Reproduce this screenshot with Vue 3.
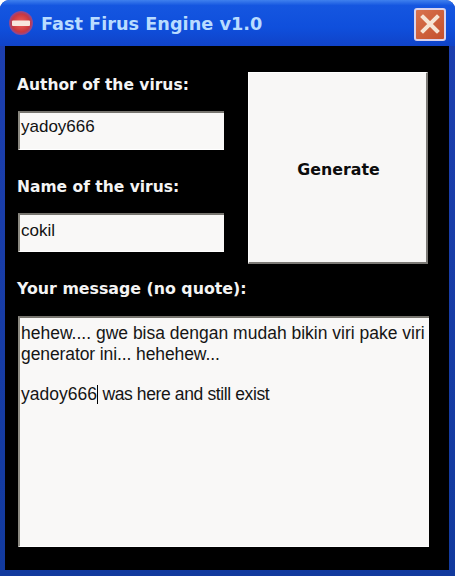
<script setup>
const title = 'Fast Firus Engine v1.0'
</script>

<template>
  <div class="window">
    <header class="titlebar">
      <svg class="app-icon" width="26" height="26" viewBox="0 0 26 26">
        <defs>
          <radialGradient id="stop" cx="50%" cy="50%" r="50%">
            <stop offset="0%" stop-color="#f0605a" />
            <stop offset="75%" stop-color="#c9383f" />
            <stop offset="100%" stop-color="#8a4a9a" />
          </radialGradient>
        </defs>
        <circle cx="13" cy="13" r="12" fill="url(#stop)" />
        <rect x="4" y="10.5" width="18" height="5.5" rx="1" fill="#f8e6e0" />
      </svg>
      <span class="title">{{ title }}</span>
      <button class="close" type="button">
        <svg width="22" height="22" viewBox="0 0 22 22">
          <path d="M4 4 L18 18 M18 4 L4 18" stroke="#f6e4d4" stroke-width="4" stroke-linecap="square" fill="none" />
        </svg>
      </button>
    </header>
    <main class="client">
      <div class="top">
        <div class="fields">
          <label class="label first">Author of the virus:</label>
          <div class="field author">yadoy666</div>
          <label class="label second">Name of the virus:</label>
          <div class="field name">cokil</div>
        </div>
        <div class="generate">Generate</div>
      </div>
      <label class="label third">Your message (no quote):</label>
      <div class="message">
        <div>hehew.... gwe bisa dengan mudah bikin viri pake viri</div>
        <div class="tight">generator ini... hehehew...</div>
        <div class="blank">&nbsp;</div>
        <div>yadoy666<span class="caret"></span><span class="tighter"> was here and still exist</span></div>
      </div>
    </main>
  </div>
</template>

<style>
html, body { margin: 0; background: #ffffff; }
</style>

<style scoped>
.window {
  width: 455px;
  height: 576px;
  box-sizing: border-box;
  padding: 0 6px 6px 5px;
  display: flex;
  flex-direction: column;
  background: linear-gradient(180deg, #1d3fb0 0%, #123a9e 100%);
  border-radius: 9px 9px 0 0;
  overflow: hidden;
}
.titlebar {
  height: 46px;
  flex: none;
  margin: 0 -6px 0 -5px;
  padding: 2px 8px 0;
  box-sizing: border-box;
  display: flex;
  align-items: center;
  background: linear-gradient(180deg, #3f80ee 0%, #1556e0 12%, #0f4fdc 60%, #1043c8 100%);
}
.app-icon { flex: none; margin-bottom: 3px; }
.title {
  margin-left: 7px;
  font: bold 17.7px "DejaVu Sans", sans-serif;
  color: #b9dcff;
  flex: 1;
}
.close {
  width: 32px;
  height: 33px;
  padding: 0;
  margin-right: 1px;
  display: flex;
  align-items: center;
  justify-content: center;
  box-sizing: border-box;
  background: linear-gradient(135deg, #d8734e, #c4502c);
  border: 2px solid #d9d3ec;
  border-radius: 3px;
}
.client {
  flex: 1;
  background: #000000;
  padding: 26px 20px 23px 13px;
  display: flex;
  flex-direction: column;
}
.top {
  display: flex;
  gap: 24px;
  height: 192px;
  flex: none;
}
.fields {
  width: 206px;
  flex: none;
  display: flex;
  flex-direction: column;
}
.label {
  display: block;
  font: bold 15.5px/20px "DejaVu Sans", sans-serif;
  color: #f4f4f4;
  white-space: nowrap;
}
.first { margin: 3px 0 16px -1px; }
.second { margin: 27px 0 16px -1px; }
.third { margin: 15px 0 17px -1px; font-size: 15.8px; }
.field {
  height: 39px;
  box-sizing: border-box;
  padding-left: 1px;
  display: flex;
  align-items: center;
  background: #f9f8f7;
  border-top: 2px solid #77756f;
  border-left: 2px solid #8a8880;
  border-bottom: 1px solid #ffffff;
  font: 17px "Liberation Sans", sans-serif;
  color: #111111;
}
.author { padding-bottom: 8px; }
.name { padding-bottom: 5px; }
.generate {
  width: 180px;
  height: 192px;
  box-sizing: border-box;
  display: flex;
  align-items: center;
  justify-content: center;
  background: #f8f7f6;
  border-right: 2px solid #7c7a76;
  border-bottom: 2px solid #7c7a76;
  border-left: 1px solid #ffffff;
  border-top: 1px solid #ffffff;
  font: bold 15.8px "DejaVu Sans", sans-serif;
  color: #0c0c0c;
  padding: 4px 0 0 2px;
}
.message {
  flex: 1;
  box-sizing: border-box;
  padding: 5px 4px 0 1px;
  background: #f9f8f7;
  border-top: 2px solid #77756f;
  border-left: 2px solid #8a8880;
  border-bottom: 1px solid #ffffff;
  font: 17.5px/20.5px "Liberation Sans", sans-serif;
  color: #151515;
  white-space: nowrap;
  overflow: hidden;
}
.tight { letter-spacing: -0.1px; }
.tighter { letter-spacing: -0.38px; }
.blank { height: 20px; }
.caret {
  display: inline-block;
  width: 1px;
  height: 19px;
  background: #000000;
  vertical-align: -4px;
}
</style>
